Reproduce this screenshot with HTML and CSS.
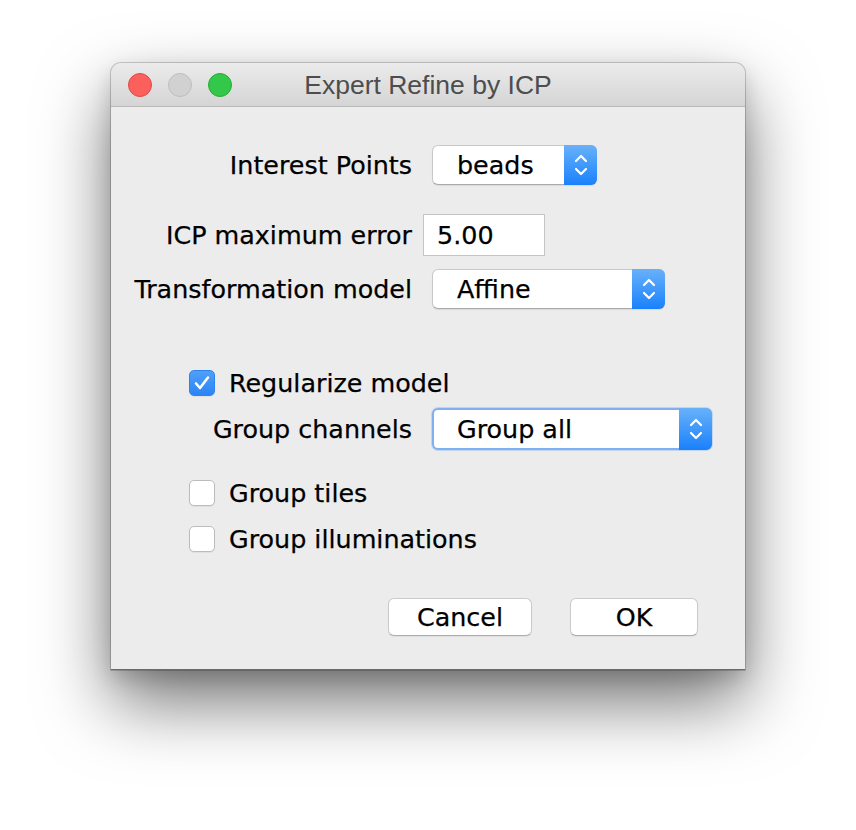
FILE: index.html
```html
<!DOCTYPE html>
<html>
<head>
<meta charset="utf-8">
<link rel="stylesheet" href="styles.css">
</head>
<body>
<div class="page">
  <div class="window">
    <div class="titlebar">
      <div class="lights">
        <span class="light red"></span>
        <span class="light gray"></span>
        <span class="light green"></span>
      </div>
      <div class="title">Expert Refine by ICP</div>
      <div></div>
    </div>
    <div class="content">
      <div class="row r1">
        <div class="lbl">Interest Points</div>
        <div class="popup w-beads">
          <span class="ptext">beads</span>
          <span class="arrows"><svg width="14" height="24" viewBox="0 0 14 24"><path d="M2 8 L7 3 L12 8 M2 16 L7 21 L12 16" fill="none" stroke="#fff" stroke-width="2.2" stroke-linecap="round" stroke-linejoin="round"/></svg></span>
        </div>
      </div>
      <div class="row r2">
        <div class="lbl">ICP maximum error</div>
        <div class="field">5.00</div>
      </div>
      <div class="row r3">
        <div class="lbl">Transformation model</div>
        <div class="popup w-affine">
          <span class="ptext">Affine</span>
          <span class="arrows"><svg width="14" height="24" viewBox="0 0 14 24"><path d="M2 8 L7 3 L12 8 M2 16 L7 21 L12 16" fill="none" stroke="#fff" stroke-width="2.2" stroke-linecap="round" stroke-linejoin="round"/></svg></span>
        </div>
      </div>
      <div class="check-row r4">
        <span class="cb checked"><svg width="18" height="16" viewBox="0 0 18 16"><path d="M3 8.5 L7 13 L15 2.5" fill="none" stroke="#fff" stroke-width="2.6" stroke-linecap="round" stroke-linejoin="round"/></svg></span>
        <span class="cbl">Regularize model</span>
      </div>
      <div class="row r5">
        <div class="lbl">Group channels</div>
        <div class="popup w-group focus">
          <span class="ptext">Group all</span>
          <span class="arrows"><svg width="14" height="24" viewBox="0 0 14 24"><path d="M2 8 L7 3 L12 8 M2 16 L7 21 L12 16" fill="none" stroke="#fff" stroke-width="2.2" stroke-linecap="round" stroke-linejoin="round"/></svg></span>
        </div>
      </div>
      <div class="check-row r6">
        <span class="cb"></span>
        <span class="cbl">Group tiles</span>
      </div>
      <div class="check-row r7">
        <span class="cb"></span>
        <span class="cbl">Group illuminations</span>
      </div>
      <div class="buttons">
        <div class="btn cancel">Cancel</div>
        <div class="btn ok">OK</div>
      </div>
    </div>
  </div>
</div>
</body>
</html>
```

FILE: styles.css
```css
html, body {
  margin: 0;
  padding: 0;
  background: #ffffff;
}
.page {
  width: 856px;
  height: 830px;
  padding: 63px 0 0 111px;
  box-sizing: border-box;
}
.window {
  width: 634px;
  height: 607px;
  background: #ececec;
  border-radius: 10px 10px 0 0;
  border-bottom: 1px solid #6a6a6a;
  box-sizing: border-box;
  box-shadow: 0 0 0 1px rgba(0,0,0,0.18), 0 32px 70px rgba(0,0,0,0.55), 0 8px 20px rgba(0,0,0,0.15);
  font-family: "DejaVu Sans", sans-serif;
  font-size: 25.4px;
  color: #000;
  -webkit-text-stroke: 0.25px #000;
  overflow: hidden;
}
.titlebar {
  height: 43px;
  border-bottom: 1px solid #b9b9b9;
  background: linear-gradient(#ebebeb, #d5d5d5);
  display: grid;
  grid-template-columns: 1fr auto 1fr;
  align-items: center;
  border-radius: 10px 10px 0 0;
  -webkit-text-stroke: 0;
}
.lights {
  display: flex;
  gap: 16px;
  padding-left: 17px;
}
.light {
  width: 24px;
  height: 24px;
  border-radius: 50%;
  box-sizing: border-box;
}
.light.red { background: #fc605c; border: 1px solid #de4a45; }
.light.gray { background: #d1d1d1; border: 1px solid #bdbdbd; }
.light.green { background: #34c84a; border: 1px solid #27aa36; }
.title {
  font-family: "Liberation Sans", sans-serif;
  font-size: 26.5px;
  color: #4d4d4d;
  padding-top: 1px;
}
.content {
  display: flex;
  flex-direction: column;
}
.row {
  display: flex;
  align-items: center;
}
.lbl {
  width: 301px;
  text-align: right;
  white-space: nowrap;
}
.r1 { margin-top: 38px; }
.r2 { margin-top: 29px; }
.r3 { margin-top: 13px; }
.r4 { margin-top: 61px; }
.r5 { margin-top: 12px; }
.r6 { margin-top: 30px; }
.r7 { margin-top: 20px; }
.popup {
  margin-left: 20px;
  height: 40px;
  box-sizing: border-box;
  background: #fff;
  border-radius: 6px;
  border: 1px solid #c9c9c9;
  border-bottom-color: #aaaaaa;
  box-shadow: 0 1px 1px rgba(0,0,0,0.08);
  display: flex;
  align-items: center;
  justify-content: space-between;
}
.ptext {
  padding-left: 24px;
}
.arrows {
  width: 33px;
  align-self: stretch;
  margin: -1px -1px -1px 0;
  background: linear-gradient(#68b1fa, #1a81fb);
  border-radius: 0 6px 6px 0;
  display: flex;
  align-items: center;
  justify-content: center;
}
.w-beads { width: 165px; }
.w-affine { width: 233px; }
.w-group { width: 280px; height: 42px; }
.popup.focus {
  border: 2px solid #7fb0f2;
  box-shadow: 0 0 0 1px rgba(120,170,240,0.35);
}
.popup.focus .ptext { padding-left: 23px; }
.popup.focus .arrows { margin: -2px -2px -2px 0; }
.field {
  margin-left: 11px;
  width: 122px;
  height: 42px;
  box-sizing: border-box;
  background: #fff;
  border: 1px solid #c4c4c4;
  padding-left: 13px;
  display: flex;
  align-items: center;
}
.check-row {
  display: flex;
  align-items: center;
  padding-left: 78px;
  height: 26px;
}
.cb {
  width: 26px;
  height: 26px;
  box-sizing: border-box;
  border-radius: 5px;
  background: #fff;
  border: 1px solid #bcbcbc;
  box-shadow: 0 1px 1px rgba(0,0,0,0.06);
  display: flex;
  align-items: center;
  justify-content: center;
}
.cb.checked {
  background: linear-gradient(#4fa0f9, #2a84f6);
  border-color: #2f83ea;
}
.cbl {
  margin-left: 14px;
}
.buttons {
  display: flex;
  margin-top: 46px;
  padding-left: 277px;
  gap: 38px;
}
.btn {
  height: 38px;
  box-sizing: border-box;
  background: #fff;
  border: 1px solid #cacaca;
  border-bottom-color: #adadad;
  border-radius: 6px;
  box-shadow: 0 1px 1px rgba(0,0,0,0.06);
  display: flex;
  align-items: center;
  justify-content: center;
}
.btn.cancel { width: 144px; }
.btn.ok { width: 128px; }
```
